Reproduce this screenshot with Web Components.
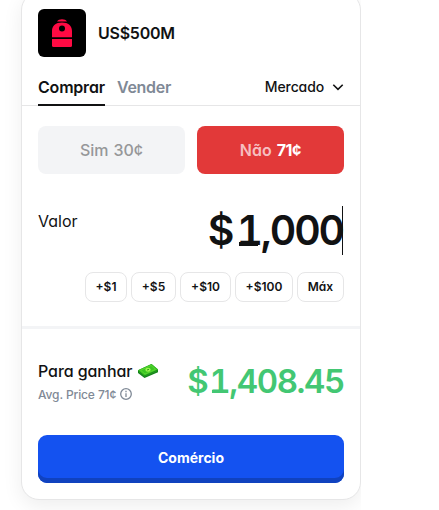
<!DOCTYPE html>
<html lang="pt">
<head>
<meta charset="utf-8">
<title>US$500M</title>
<style>
  body {
    margin: 0;
    background: #fff;
    color: #111213;
    font-family: Inter, "Liberation Sans", sans-serif;
    font-feature-settings: "cv11";
  }
</style>
</head>
<body>
<trade-card>
  <market-header slot="header">US$500M</market-header>
  <trade-tabs slot="tabs"></trade-tabs>
  <outcome-button slot="outcomes" price="30¢">Sim</outcome-button>
  <outcome-button slot="outcomes" price="71¢" selected>Não</outcome-button>
  <amount-field slot="amount" value="$1,000">Valor</amount-field>
  <amount-chip slot="chips" style="width:42px">+$1</amount-chip>
  <amount-chip slot="chips" style="width:45px">+$5</amount-chip>
  <amount-chip slot="chips" style="width:51px">+$10</amount-chip>
  <amount-chip slot="chips" style="width:58px">+$100</amount-chip>
  <amount-chip slot="chips" style="width:47px">Máx</amount-chip>
  <win-summary slot="summary"></win-summary>
  <trade-button slot="action">Comércio</trade-button>
</trade-card>

<template id="card">
  <style>
    :host { display: block; width: 361px; height: 510px; overflow: hidden; }
    .card {
      box-sizing: border-box;
      width: 340px;
      height: 508px;
      margin: -8px 0 0 21px;
      border: 1px solid #e6e6e7;
      border-radius: 18px;
      background: #fff;
      box-shadow: 0 6px 20px rgba(0, 0, 0, .07);
    }
    .outcomes { display: flex; gap: 12px; padding: 20px 16px 0; }
    .chips { display: flex; justify-content: flex-end; gap: 4px; padding: 0 16px 24px; }
    .line { height: 3px; background: #f3f4f6; }
  </style>
  <div class="card">
    <slot name="header"></slot>
    <slot name="tabs"></slot>
    <div class="outcomes"><slot name="outcomes"></slot></div>
    <slot name="amount"></slot>
    <div class="chips"><slot name="chips"></slot></div>
    <div class="line"></div>
    <slot name="summary"></slot>
    <slot name="action"></slot>
  </div>
</template>

<template id="header">
  <style>
    :host {
      display: flex;
      align-items: center;
      gap: 12px;
      padding: 16px 16px 0;
      font-size: 16px;
      font-weight: 600;
      line-height: 20px;
      letter-spacing: -.25px;
    }
    svg { display: block; }
  </style>
  <svg width="48" height="48" viewBox="0 0 48 48">
    <rect width="48" height="48" rx="6" fill="#000"/>
    <path d="M19 12.6C20 11 21.7 10.2 24 10.2S28 11 29 12.6Z" fill="#ff0a43"/>
    <path fill-rule="evenodd" d="M14 28.3V22C14 16.8 17.8 13.6 24 13.6S34 16.8 34 22V28.3ZM24 16.6A3 3 0 1 0 24 22.600A3 3 0 1 0 24 16.600Z" fill="#ff0a43"/>
    <path d="M14 30H34V36.500Q34 38 32.500 38H15.500Q14 38 14 36.500Z" fill="#ff0a43"/>
  </svg>
  <span><slot></slot></span>
</template>

<template id="tabs">
  <style>
    :host {
      box-sizing: border-box;
      display: flex;
      height: 49px;
      padding: 0 16px;
      border-bottom: 1px solid #e6e6e7;
      font-size: 16px;
      font-weight: 600;
      line-height: 20px;
    }
    .tab { box-sizing: border-box; height: 49px; padding-top: 20px; margin-right: 12px; color: #7f8996; letter-spacing: -.3px; }
    .active { width: 67px; border-bottom: 2px solid #111213; color: #111213; white-space: nowrap; letter-spacing: -.2px; }
    .type { display: flex; align-items: center; gap: 8px; height: 20px; margin: 20px 0 0 auto; font-size: 14px; font-weight: 500; letter-spacing: -.12px; }
  </style>
  <div class="tab active">Comprar</div>
  <div class="tab">Vender</div>
  <div class="type"><span>Mercado</span>
    <svg width="12" height="12" viewBox="0 0 12 12" fill="none" stroke="#111213" stroke-width="1.6"><path d="M1.300 3.700L6 8.300L10.700 3.700"/></svg>
  </div>
</template>

<template id="outcome">
  <style>
    :host {
      display: flex;
      align-items: center;
      justify-content: center;
      gap: 5px;
      flex: 1;
      height: 48px;
      border-radius: 8px;
      background: #f3f4f6;
      color: #969799;
      font-size: 16px;
      font-weight: 500;
    }
    :host([selected]) { background: #e23939; color: #fff; font-weight: 600; }
    :host([selected]) .name { color: #f6bfc0; }
    :host([selected]) .price { font-weight: 700; letter-spacing: -.4px; }
  </style>
  <span class="name"><slot></slot></span><span class="price"></span>
</template>

<template id="amount">
  <style>
    :host { display: flex; justify-content: space-between; height: 66px; padding: 32px 16px 0; font-size: 16px; }
    .label { height: 20px; margin-top: 5px; line-height: 20px; }
    .value {
      height: 49px;
      margin-right: 1px;
      border-right: 1px solid #111213;
      /* foot of the 1 */
      background: linear-gradient(#111213, #111213) right 84px top 35.500px / 19px 4px no-repeat;
      font-size: 41px;
      font-weight: 600;
      line-height: 49px;
      letter-spacing: -2.100px;
      font-feature-settings: "cv11", "tnum";
    }
    .value span { display: block; margin-right: -1px; }
    .value span::first-letter { margin-right: 4px; }
  </style>
  <span class="label"><slot></slot></span>
  <div class="value"><span></span></div>
</template>

<template id="chip">
  <style>
    :host {
      box-sizing: border-box;
      display: block;
      height: 30px;
      border: 1px solid #e6e6e7;
      border-radius: 8px;
      font-size: 12px;
      font-weight: 600;
      line-height: 28px;
      text-align: center;
    }
  </style>
  <slot></slot>
</template>

<template id="summary">
  <style>
    :host { display: flex; justify-content: space-between; height: 74px; padding: 32px 16px 0; }
    .title { display: flex; align-items: center; gap: 6px; height: 20px; font-size: 16px; font-weight: 500; white-space: nowrap; letter-spacing: -.08px; }
    .avg { display: flex; align-items: center; gap: 4px; height: 16px; margin-top: 5px; color: #7f8996; font-size: 12px; font-weight: 500; white-space: nowrap; letter-spacing: -.12px; }
    .total {
      height: 40px;
      /* foot of the 1 */
      background: linear-gradient(#43c773, #43c773) right 116px top 29px / 16px 3px no-repeat;
      line-height: 40px;
      font-size: 33px;
      font-weight: 600;
      letter-spacing: -1.400px;
      color: #43c773;
      font-feature-settings: "cv11", "tnum";
    }
    .total span { display: block; }
    .total span::first-letter { margin-right: 2px; }
    svg { display: block; flex: none; }
  </style>
  <div>
    <div class="title"><span>Para ganhar</span>
      <svg width="20" height="14" viewBox="0 0 20 14">
        <path d="M0 6.300L13.500 0L20 5.500V8.300L6.500 14L0 9Z" fill="#128318"/>
        <path d="M0 6.300L13.500 0L20 5.500L6.500 11.500Z" fill="#3bc522"/>
        <path d="M2.500 6.300L13 1.500L17.500 5.400L7 10Z" fill="none" stroke="#5fd832" stroke-width=".8"/>
        <ellipse cx="10" cy="5.800" rx="2.700" ry="2" fill="#9af34d"/>
        <path d="M9 6L11 5.400" stroke="#259b1c"/>
        <path d="M1 8L6.500 12.300L19.500 6.800" fill="none" stroke="#37a62b" stroke-width=".5"/>
      </svg>
    </div>
    <div class="avg"><span>Avg. Price 71¢</span>
      <svg width="12" height="12" viewBox="0 0 12 12" fill="none" stroke="#7f8996" stroke-width="1.300"><circle cx="6" cy="6" r="5.300"/><path d="M6 5.300V9M6 2.800V4.200"/></svg>
    </div>
  </div>
  <div class="total"><span>$1,408.45</span></div>
</template>

<template id="button">
  <style>
    :host {
      display: block;
      height: 48px;
      margin: 0 16px;
      border-radius: 9px;
      background: #1452f0;
      box-shadow: inset 0 -5px #1042bf;
      color: #fff;
      font-size: 14px;
      font-weight: 650;
      line-height: 46px;
      text-align: center;
    }
  </style>
  <slot></slot>
</template>

<script>
  // every element just clones its own template
  class TemplateElement extends HTMLElement {
    connectedCallback() {
      this.attachShadow({mode : 'open'});
      const template = document.getElementById(this.constructor.template);
      this.shadowRoot.append(template.content.cloneNode(true));
    }
  }

  class TradeCard extends TemplateElement { static template = 'card'; }
  class MarketHeader extends TemplateElement { static template = 'header'; }
  class TradeTabs extends TemplateElement { static template = 'tabs'; }
  class AmountChip extends TemplateElement { static template = 'chip'; }
  class WinSummary extends TemplateElement { static template = 'summary'; }
  class TradeButton extends TemplateElement { static template = 'button'; }

  class OutcomeButton extends TemplateElement {
    static template = 'outcome';
    connectedCallback() {
      super.connectedCallback();
      this.shadowRoot.querySelector('.price').textContent = this.getAttribute('price');
    }
  }

  class AmountField extends TemplateElement {
    static template = 'amount';
    connectedCallback() {
      super.connectedCallback();
      this.shadowRoot.querySelector('.value span').textContent = this.getAttribute('value');
    }
  }

  customElements.define('trade-card', TradeCard);
  customElements.define('market-header', MarketHeader);
  customElements.define('trade-tabs', TradeTabs);
  customElements.define('outcome-button', OutcomeButton);
  customElements.define('amount-field', AmountField);
  customElements.define('amount-chip', AmountChip);
  customElements.define('win-summary', WinSummary);
  customElements.define('trade-button', TradeButton);
</script>
</body>
</html>
